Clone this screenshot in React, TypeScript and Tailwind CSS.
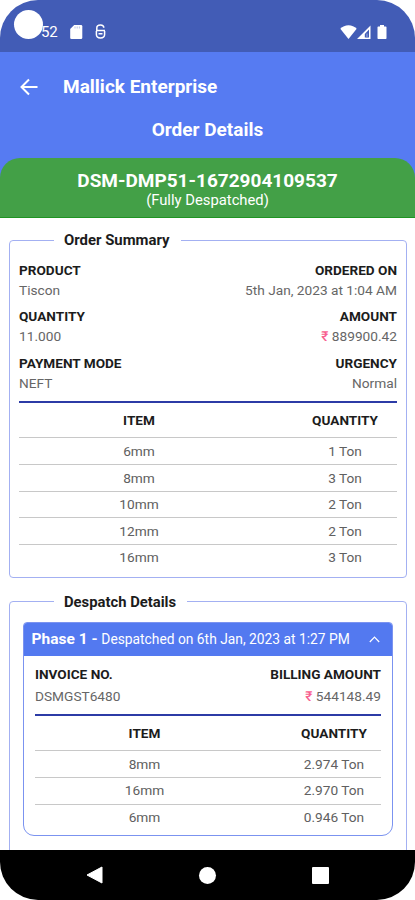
import React, { useState } from 'react';

const summary = [
  { left: ['PRODUCT', 'Tiscon'], right: ['ORDERED ON', '5th Jan, 2023 at 1:04 AM'] },
  { left: ['QUANTITY', '11.000'], right: ['AMOUNT', '889900.42'], money: true },
  { left: ['PAYMENT MODE', 'NEFT'], right: ['URGENCY', 'Normal'] },
];

const items = [
  ['6mm', '1 Ton'],
  ['8mm', '3 Ton'],
  ['10mm', '2 Ton'],
  ['12mm', '2 Ton'],
  ['16mm', '3 Ton'],
];

const despatched = [
  ['8mm', '2.974 Ton'],
  ['16mm', '2.970 Ton'],
  ['6mm', '0.946 Ton'],
];

function StatusBar() {
  return (
    <div className="flex h-[52px] shrink-0 items-center justify-between bg-[#425cb6] pl-[14px] pr-[28px] pt-[4px] text-white">
      <div className="flex items-center">
        <div className="relative z-10 -mt-[7px] size-[29px] rounded-full bg-white" />
        <span className="-ml-[2px] mt-[9px] mb-[2px] text-[15px] leading-5 tracking-[-0.2px]">52</span>
        <svg className="ml-[13px] mt-[9px] mb-[2px]" width="13" height="14" viewBox="0 0 13 14" fill="currentColor">
          <path d="M4.200 0H11a1.300 1.300 0 0 1 1.300 1.300v11.400A1.300 1.300 0 0 1 11 14H1.500a1.300 1.300 0 0 1-1.300-1.300V4z" />
          <path d="M5 1.500v2M7.200 1.500v2M9.400 1.500v2" stroke="#a9b6e0" strokeWidth="0.8" />
        </svg>
        <svg className="ml-[12px] mt-[9px] mb-[2px]" width="11" height="15" viewBox="0 0 11 15" fill="none" stroke="currentColor" strokeWidth="1.500">
          <path d="M8.800 3.800C8.800 2 7.600 1 5.500 1 3.200 1 1.800 2.200 1.800 4v2.600H10" />
          <path d="M1.400 7v3.500c0 2 1.600 3.400 4.100 3.400s4.100-1.400 4.100-3.400V7M3.500 9.800h4" />
        </svg>
      </div>
      <div className="mt-[9px] mb-[2px] flex items-center">
        <svg width="17" height="14" viewBox="0 0 17 14" fill="currentColor">
          <path d="M8.500 14 .3 3.700C2.500 1.500 5.300.3 8.500.3s6 1.200 8.200 3.400z" />
        </svg>
        <svg width="14" height="14" viewBox="0 0 14 14" fill="currentColor">
          <path fillRule="evenodd" d="M13.500.5V14H0zM12 4.500 7.800 9V12.500H12z" />
          <path d="M9.200 8.500h1.500v4H9.200z" fill="#8295d2" />
        </svg>
        <svg className="ml-[6px]" width="10" height="14" viewBox="0 0 10 14" fill="currentColor">
          <path d="M3 0h4v1.500h1.800c.4 0 .7.3.7.7v11c0 .5-.3.8-.7.8H1.200c-.4 0-.7-.3-.7-.8v-11c0-.4.3-.7.7-.7H3z" />
        </svg>
      </div>
    </div>
  );
}

function Label({ children }: { children: React.ReactNode }) {
  return <div className="text-[13.600px] font-bold leading-5 text-[#1c1c1c]">{children}</div>;
}

function Value({ money, children }: { money?: boolean; children: React.ReactNode }) {
  return (
    <div className="text-[13.700px] leading-5 text-[#666]">
      {money && <span className="font-medium text-[#f8608f]">₹ </span>}
      {children}
    </div>
  );
}

function ItemTable({ rows, cols }: { rows: string[][]; cols: string }) {
  return (
    <div className="text-center">
      <div className={`grid h-[34.400px] items-center justify-between text-[13.600px] font-bold text-[#1c1c1c] ${cols}`}>
        <span>ITEM</span>
        <span>QUANTITY</span>
      </div>
      {rows.map(([item, qty]) => (
        <div
          key={item}
          className={`grid h-[26.600px] items-center justify-between border-t border-[#c8c8c8] text-[13.700px] text-[#606060] ${cols}`}
        >
          <span>{item}</span>
          <span>{qty}</span>
        </div>
      ))}
    </div>
  );
}

export default function App() {
  const [open, setOpen] = useState(true);

  return (
    <div className="h-[900px] w-[415px] bg-white font-['Roboto',sans-serif]">
      <div className="flex h-full flex-col overflow-hidden rounded-t-[38px] rounded-b-[38px] bg-white">
        <StatusBar />

        {/* Header */}
        <header className="shrink-0 bg-[#567bf2] text-white">
          <div className="flex h-[70px] items-center pl-[20px]">
            <button aria-label="Back">
              <svg width="18" height="18" viewBox="0 0 18 18" fill="none" stroke="currentColor" strokeWidth="2">
                <path d="M17.500 9H2M9 1.500 1.500 9 9 16.500" />
              </svg>
            </button>
            <h1 className="ml-[25px] text-[19px] font-bold">Mallick Enterprise</h1>
          </div>
          <h2 className="h-[36px] text-center text-[19px] font-bold leading-[16px]">Order Details</h2>
          <div className="h-[60px] rounded-t-[20px] border-b border-[#1f9422] bg-[#43a047] pt-[12px] text-center">
            <div className="text-[19px] font-bold leading-[22px]">DSM-DMP51-1672904109537</div>
            <div className="text-[14.800px] leading-[17px]">(Fully Despatched)</div>
          </div>
        </header>

        <main className="min-h-0 flex-1 overflow-hidden pl-[9px] pr-[8px] pt-3">
          <fieldset className="rounded-[4px] border border-[#a3b0f2] px-[9px] pb-[6.600px]">
            <legend className="ml-[35px] h-5 pl-[10px] pr-[11px] text-[14.900px] font-bold leading-5 text-[#1c1c1c]">
              Order Summary
            </legend>
            <div className="flex h-[153px] flex-col gap-[6.600px] border-b-2 border-[#2c3ba6] pt-[9.600px]">
              {summary.map((row) => (
                <div key={row.left[0]} className="flex justify-between">
                  <div>
                    <Label>{row.left[0]}</Label>
                    <Value>{row.left[1]}</Value>
                  </div>
                  <div className="text-right">
                    <Label>{row.right[0]}</Label>
                    <Value money={row.money}>{row.right[1]}</Value>
                  </div>
                </div>
              ))}
            </div>
            <ItemTable rows={items} cols="grid-cols-[240px_104px]" />
          </fieldset>

          <fieldset className="mt-[14px] h-[300px] rounded-[4px] border border-[#a3b0f2] px-[13px]">
            <legend className="ml-[31px] h-5 pl-[10px] pr-[11px] text-[14.800px] font-bold leading-5 text-[#1c1c1c]">
              Despatch Details
            </legend>
            <section className="mt-[10px] overflow-hidden rounded-t-[4px] rounded-b-[11px] border border-[#7b93f0]">
              <button
                onClick={() => setOpen(!open)}
                className="flex h-[33px] w-full items-center justify-between bg-[#5379f0] pl-[7.500px] pr-[12px] text-white"
              >
                <span className="text-[13.800px]">
                  <b className="text-[15.500px]">Phase 1 - </b>
                  Despatched on 6th Jan, 2023 at 1:27 PM
                </span>
                <svg width="11" height="7" viewBox="0 0 11 7" fill="none" stroke="currentColor" strokeWidth="1.200">
                  <path d={open ? 'M.8 6 5.500 1.200 10.200 6' : 'M.8 1 5.500 5.800 10.200 1'} />
                </svg>
              </button>
              {open && (
                <div className="px-[11px] pb-[4.600px]">
                  <div className="flex h-[60px] justify-between border-b-2 border-[#2c3ba6] pt-[8px]">
                    <div className="flex flex-col gap-[2px]">
                      <Label>INVOICE NO.</Label>
                      <Value>DSMGST6480</Value>
                    </div>
                    <div className="flex flex-col gap-[2px] text-right">
                      <Label>BILLING AMOUNT</Label>
                      <Value money>544148.49</Value>
                    </div>
                  </div>
                  <ItemTable rows={despatched} cols="grid-cols-[219px_94px]" />
                </div>
              )}
            </section>
          </fieldset>
        </main>

        {/* Android navigation */}
        <nav className="flex h-[50px] shrink-0 items-center justify-between bg-black px-[86px] text-white">
          <svg width="17" height="18" viewBox="0 0 17 18" fill="currentColor">
            <path d="M16 1v16L1 9z" stroke="currentColor" strokeLinejoin="round" />
          </svg>
          <div className="size-[17px] rounded-full bg-white" />
          <div className="size-[17px] rounded-[1px] bg-white" />
        </nav>
      </div>
    </div>
  );
}
